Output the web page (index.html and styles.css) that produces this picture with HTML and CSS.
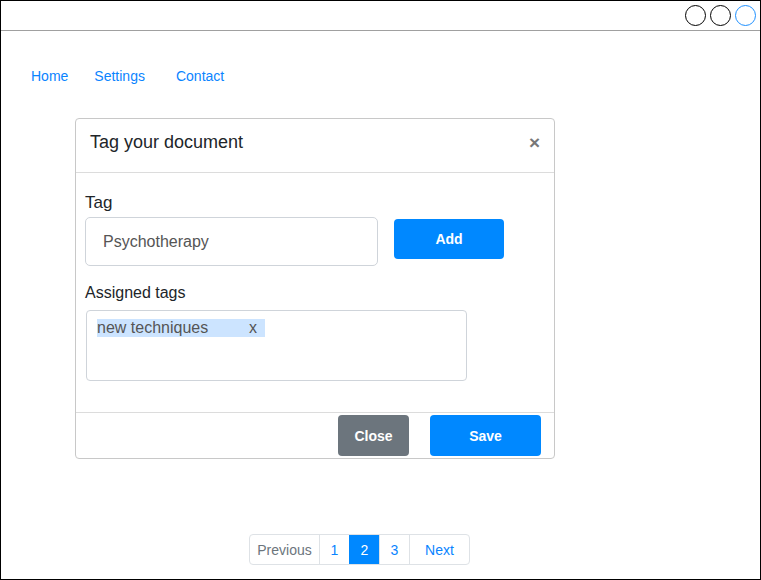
FILE: index.html
```html
<!DOCTYPE html>
<html>
<head>
<meta charset="utf-8">
<link rel="stylesheet" href="styles.css">
</head>
<body>
<div class="frame">
  <div class="topbar">
    <span class="dot"></span><span class="dot"></span><span class="dot dot-blue"></span>
  </div>
  <nav class="nav">
    <a class="nav-link">Home</a>
    <a class="nav-link">Settings</a>
    <a class="nav-link nav-contact">Contact</a>
  </nav>
  <div class="modal">
    <div class="modal-header">
      <span class="modal-title">Tag your document</span>
      <span class="modal-close">×</span>
    </div>
    <div class="modal-body">
      <div class="label">Tag</div>
      <div class="tag-row">
        <div class="input">Psychotherapy</div>
        <button class="btn btn-primary btn-add">Add</button>
      </div>
      <div class="label label-assigned">Assigned tags</div>
      <div class="tagbox">
        <span class="chip"><span class="chip-text">new techniques</span><span class="chip-x">x</span></span>
      </div>
    </div>
    <div class="modal-footer">
      <button class="btn btn-secondary btn-close">Close</button>
      <button class="btn btn-primary btn-save">Save</button>
    </div>
  </div>
  <div class="pagination">
    <span class="page page-prev">Previous</span>
    <span class="page page-num">1</span>
    <span class="page page-num page-active">2</span>
    <span class="page page-num">3</span>
    <span class="page page-next">Next</span>
  </div>
</div>
</body>
</html>
```
FILE: styles.css
```css
* { box-sizing: border-box; }
html, body { margin: 0; padding: 0; }
body { font-family: "Liberation Sans", Arial, sans-serif; background: #fff; color: #212529; }
.frame {
  width: 761px; height: 580px;
  border: 1px solid #000;
  display: flex; flex-direction: column;
}
.topbar {
  height: 30px;
  border-bottom: 1px solid #a0a0a0;
  display: flex; justify-content: flex-end; align-items: center;
  gap: 4px; padding-right: 4px;
}
.dot { width: 21px; height: 21px; border: 1px solid #000; border-radius: 50%; }
.dot-blue { border-color: #1e90ff; }
.nav { display: flex; gap: 26px; padding-left: 30px; margin-top: 37px; height: 16px; }
.nav-link { color: #0a84ff; font-size: 14px; line-height: 16px; }
.nav-contact { margin-left: 5px; }
.modal {
  margin-left: 74px; margin-top: 34px;
  width: 480px; height: 341px;
  border: 1px solid #c8c8c8; border-radius: 4px;
  display: flex; flex-direction: column;
}
.modal-header {
  height: 54px; border-bottom: 1px solid #dcdcdc;
  display: flex; align-items: center; justify-content: space-between;
  padding: 0 14px 6px 14px;
}
.modal-title { font-size: 18px; color: #212529; }
.modal-close { font-size: 19px; color: #777; font-weight: bold; line-height: 1; margin-top: -1px; }
.modal-body { padding: 20px 9px 0 9px; flex: 1; }
.label { font-size: 17px; line-height: 20px; color: #212529; }
.tag-row { display: flex; align-items: flex-start; margin-top: 4px; gap: 16px; }
.input {
  width: 293px; height: 49px;
  border: 1px solid #cfd4da; border-radius: 5px;
  padding-left: 17px; display: flex; align-items: center;
  font-size: 16px; color: #555;
}
.btn {
  border: none; border-radius: 4px; color: #fff;
  font-family: "Liberation Sans", Arial, sans-serif; font-size: 14px; font-weight: bold;
}
.btn-primary { background: #0088ff; }
.btn-secondary { background: #6c757d; }
.btn-add { width: 110px; height: 40px; margin-top: 2px; }
.label-assigned { font-size: 16px; margin-top: 17px; }
.tagbox {
  width: 381px; height: 71px; margin-top: 7px; margin-left: 1px;
  border: 1px solid #cfd4da; border-radius: 4px;
  padding: 8px 10px;
}
.chip {
  display: inline-flex; align-items: center; height: 18px;
  background: #cce4ff; color: #555; font-size: 16px; width: 168px;
}
.chip-text { width: 152px; }
.chip-x { font-size: 16px; }
.modal-footer {
  height: 46px; border-top: 1px solid #dcdcdc;
  display: flex; justify-content: flex-end; align-items: flex-start;
  padding: 2px 13px 0 0; gap: 21px;
}
.btn-close { width: 71px; height: 41px; }
.btn-save { width: 111px; height: 41px; }
.pagination {
  display: flex; margin-left: 248px; margin-top: 75px;
  height: 31px; width: 221px;
  border: 1px solid #dee2e6; border-radius: 4px; overflow: hidden;
}
.page {
  display: flex; align-items: center; justify-content: center;
  font-size: 14px; color: #0a84ff; border-left: 1px solid #dee2e6;
}
.page-prev { width: 69px; color: #6c757d; border-left: none; }
.page-num { width: 30px; }
.page-active { background: #0088ff; color: #fff; border-left-color: #0088ff; }
.page-next { flex: 1; }
```
